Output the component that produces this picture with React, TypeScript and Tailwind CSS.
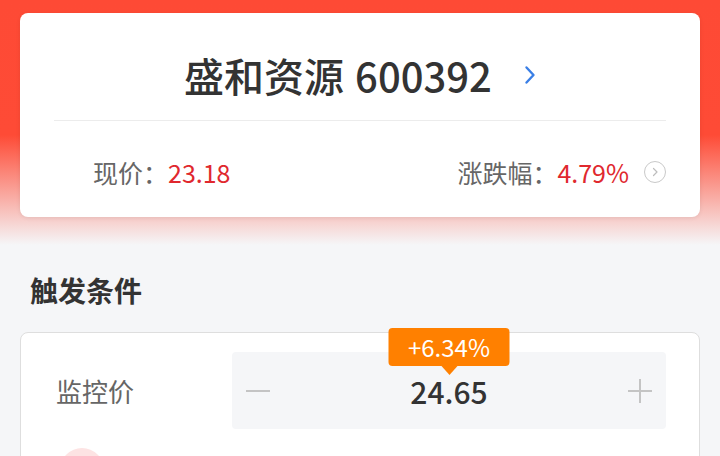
import React from "react";

const font = { fontFamily: '"Noto Sans CJK SC", "Noto Sans", sans-serif' };

function Chevron({ className }: { className?: string }) {
  return (
    <svg viewBox="0 0 12 20" className={className} fill="none">
      <path d="M2.5 2.5 L9.5 10 L2.5 17.5" stroke="currentColor" strokeWidth="2.4" strokeLinecap="round" strokeLinejoin="round" />
    </svg>
  );
}

function StockCard() {
  return (
    <div className="h-[204px] rounded-lg bg-white shadow-[0_1px_4px_rgba(0,0,0,0.08)]">
      <div className="flex h-[107px] items-center justify-center pt-[17px]">
        <span className="flex gap-[11px] text-[40px] font-medium leading-none text-[#333333]">
          <span>盛和资源</span>
          <span>600392</span>
        </span>
        <Chevron className="ml-[32px] h-[20px] w-[12px] text-[#3a7fe6]" />
      </div>
      <div className="mx-[34px] h-px bg-[#ececec]" />
      <div className="flex h-[96px] items-center justify-between pl-[73px] pr-[34px] pt-[6px] text-[25px] leading-none">
        <div className="flex items-center">
          <span className="text-[#666666]">现价：</span>
          <span className="text-[#e0282e]">23.18</span>
        </div>
        <div className="flex items-center">
          <span className="text-[#666666]">涨跌幅：</span>
          <span className="text-[#e0282e]">4.79%</span>
          <span className="ml-[15px] flex h-[22px] w-[22px] items-center justify-center rounded-full border border-[#c9c9c9]">
            <svg viewBox="0 0 10 10" className="h-[10px] w-[10px] text-[#bdbdbd]" fill="none">
              <path d="M3.5 1.5 L7 5 L3.5 8.5" stroke="currentColor" strokeWidth="1.2" strokeLinecap="round" strokeLinejoin="round" />
            </svg>
          </span>
        </div>
      </div>
    </div>
  );
}

function Stepper() {
  return (
    <div className="relative flex h-[77px] w-[434px] items-center justify-between rounded bg-[#f5f6f8] px-[14px]">
      <div className="absolute left-1/2 top-[-24px] -translate-x-1/2">
        <div className="flex h-[38px] w-[121px] items-center justify-center rounded bg-[#ff8000] text-[24px] leading-none text-white">
          +6.34%
        </div>
        <div className="mx-auto h-0 w-0 border-x-[8px] border-t-[9px] border-x-transparent border-t-[#ff8000]" />
      </div>
      <span className="h-[2px] w-[24px] bg-[#c4c4c4]" />
      <span className="text-[30px] font-medium leading-none text-[#333333]">24.65</span>
      <span className="relative h-[24px] w-[24px]">
        <span className="absolute left-0 top-[11px] h-[2px] w-[24px] bg-[#c4c4c4]" />
        <span className="absolute left-[11px] top-0 h-[24px] w-[2px] bg-[#c4c4c4]" />
      </span>
    </div>
  );
}

export default function App() {
  return (
    <div
      className="h-[456px] w-[720px] overflow-hidden bg-[linear-gradient(to_bottom,#fe4a35_0px,#fe4b36_135px,#f5f6f8_245px,#f5f6f8_100%)] px-5 pt-[13px]"
      style={font}
    >
      <StockCard />
      <div className="flex h-[115px] items-center pl-[10px] pt-[31px]">
        <span className="text-[28px] font-bold leading-none text-[#333333]">触发条件</span>
      </div>
      <div className="rounded-lg border border-[#dedede] bg-white">
        <div className="flex items-center justify-between pl-[35px] pr-[33px] pt-[19px]">
          <span className="text-[26px] leading-none text-[#666666]">监控价</span>
          <Stepper />
        </div>
        <div className="pl-[39px] pt-[19px]">
          <div className="h-[44px] w-[44px] rounded-full bg-[#fde3e3]" />
        </div>
        <div className="h-[40px]" />
      </div>
    </div>
  );
}
